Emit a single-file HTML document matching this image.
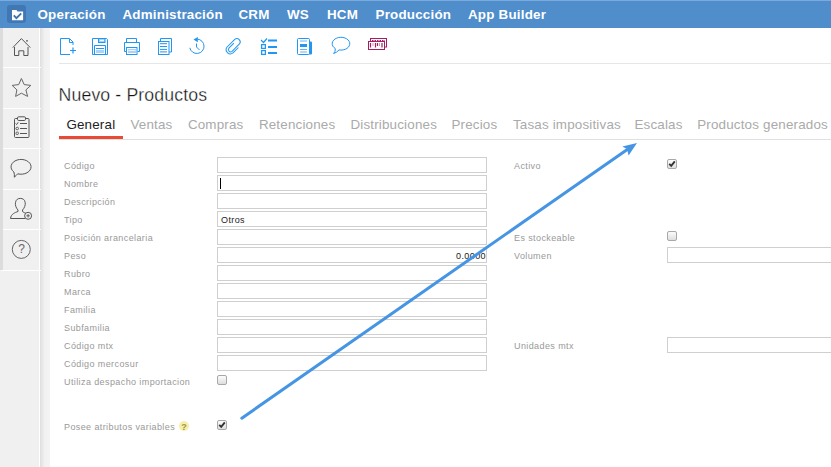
<!DOCTYPE html>
<html><head><meta charset="utf-8">
<style>
*{margin:0;padding:0;box-sizing:border-box}
html,body{width:831px;height:467px;overflow:hidden;background:#fff;font-family:"Liberation Sans",sans-serif}
.abs{position:absolute}
#top{position:absolute;left:0;top:0;width:831px;height:28px;background:#4f8dcb;border-top:1px solid #7aaade}
#logo{position:absolute;left:7px;top:5px;width:19px;height:18px;background:#4178b3;border-radius:3px}
.nav{position:absolute;top:7px;color:#fff;font-weight:bold;font-size:13.4px;letter-spacing:0.2px;line-height:15px;white-space:nowrap}
#side{position:absolute;left:0;top:28px;width:39px;height:439px;background:#f0f0f0}
#strip{position:absolute;left:0;top:28px;width:3px;height:242px;background:#dcdcdc}
#sidel{position:absolute;left:39px;top:28px;width:1px;height:439px;background:#fff}
#grad{position:absolute;left:40px;top:28px;width:10px;height:439px;background:linear-gradient(to right,#dedede,#f1f1f1 45%,#f4f4f4)}
.sep{position:absolute;left:3px;width:38px;height:1px;background:#fff}
.sico{position:absolute;left:0;width:39px}
#tbline{position:absolute;left:59px;top:63px;width:772px;height:1px;background:#e6e6e6}
#title{position:absolute;left:58.6px;top:85px;font-size:17.7px;letter-spacing:0.12px;color:#111;-webkit-text-stroke:0.3px #fff;white-space:nowrap;line-height:20px}
.tab{position:absolute;top:117px;font-size:13.4px;letter-spacing:0.18px;color:#aaa;white-space:nowrap;line-height:15px}
#tabline{position:absolute;left:59px;top:139px;width:772px;height:1px;background:#e0e0e0}
#tabred{position:absolute;left:59px;top:136px;width:64px;height:3px;background:#e84a35}
.lbl{position:absolute;font-size:9px;letter-spacing:0.4px;color:#999;white-space:nowrap;line-height:12px}
.inp{position:absolute;height:16px;border:1px solid #cfcfcf;background:#fff;font-size:9px;letter-spacing:0.4px;color:#222;line-height:14px;padding-top:1px}
.cb{position:absolute;width:10px;height:10px;border:1px solid #a8a8a8;border-radius:2px;background:linear-gradient(#fcfcfc,#dedede)}
</style></head><body>
<div id="top"></div>
<div id="logo">
<svg width="19" height="18" viewBox="0 0 19 18" style="position:absolute;left:0;top:0">
<path d="M5 5h4.5l1 1.4h5.6v8.8H5z" fill="#fff"/>
<path d="M6.8 10.4L9.4 13.1L14.2 8.3" stroke="#3f74ad" stroke-width="1.9" fill="none"/>
</svg>
</div>
<div class="nav" style="left:37.5px">Operación</div>
<div class="nav" style="left:122.5px">Administración</div>
<div class="nav" style="left:238.5px">CRM</div>
<div class="nav" style="left:287px">WS</div>
<div class="nav" style="left:327px">HCM</div>
<div class="nav" style="left:375.5px">Producción</div>
<div class="nav" style="left:468px">App Builder</div>

<div id="side"></div>
<div id="strip"></div>
<div id="sidel"></div>
<div id="grad"></div>
<div class="sep" style="top:67px"></div>
<div class="sep" style="top:108px"></div>
<div class="sep" style="top:148px"></div>
<div class="sep" style="top:189px"></div>
<div class="sep" style="top:229px"></div>
<div class="sep" style="top:270px;left:1px;width:40px"></div>


<svg class="abs" style="left:0;top:0" width="400" height="70" fill="none" stroke="#2196f3" stroke-width="1">
<!-- new doc -->
<path d="M69.5 38.5H60.5V54.5H70"/>
<path d="M69.5 38.5L73 42V45"/>
<path d="M69.5 39V42.5H73" stroke-width="1"/>
<path d="M70 50.5H76M73 47.5V53.5" stroke-width="1.2"/>
<!-- floppy -->
<path d="M92.5 38.5H106.5L107.5 39.5V54.5H92.5Z"/>
<rect x="98.5" y="38.5" width="6.5" height="4" fill="#a6d4fa"/>
<path d="M100 40.5H104" stroke="#fff"/>
<path d="M94.5 54.5V45.5H105.5V54.5"/>
<path d="M96 48.5H104"/>
<rect x="96" y="50" width="8" height="3" fill="#a6d4fa" stroke="none"/>
<!-- printer -->
<path d="M126.5 42.5V38.5H136.5V42.5"/>
<path d="M126.5 51.5H124.5V42.5H139.5V51.5H137.5"/>
<rect x="126.5" y="47.5" width="10.5" height="7" fill="#fff"/>
<rect x="128" y="49" width="8" height="4" fill="#a6d4fa" stroke="none"/>
<path d="M128.5 50.5H135.5" stroke="#fff" stroke-width="0.8"/>
<!-- copy -->
<path d="M160.5 41V38.5H171.5V52H169"/>
<rect x="158.5" y="41.5" width="10.5" height="13" fill="#fff"/>
<path d="M160 43.7H167M160 46.5H167M160 49.4H167M160 51.9H167" stroke-width="1"/>
<!-- history -->
<path d="M189.8 47.8A7.2 7.2 0 1 0 197.3 39.1"/>
<path d="M193.5 39.6L197.8 37V42.2Z" fill="#2196f3" stroke="none"/>
<path d="M196.5 43.5V47L199.5 50"/>
<!-- paperclip -->
<g transform="rotate(45 233.5 46.5)">
<path d="M231.4 43.9V50.9A2.26 2.26 0 0 0 235.9 50.9V40.5A3.32 3.32 0 0 0 229.3 40.5V51.4A4.24 4.24 0 0 0 237.7 51.4V43.7"/>
</g>
<!-- checklist -->
<path d="M261 40L263.5 42.5L267 38.5" stroke-width="1.2"/>
<rect x="261.6" y="44.6" width="3.8" height="3.8" stroke-width="1.25"/>
<rect x="261.6" y="50.6" width="3.8" height="3.8" stroke-width="1.25"/>
<path d="M268 40.5H277M268 47H277M268 53H277" stroke-width="2"/>
<!-- newspaper -->
<rect x="309" y="41.5" width="3" height="13" rx="1" fill="#2196f3" stroke="none"/>
<rect x="297.5" y="38.5" width="12" height="16" rx="1" fill="#fff"/>
<path d="M300 41H307M300 49.5H307M300 52H307" stroke="#64b5f6"/>
<rect x="300" y="44" width="7" height="3" fill="#2196f3" stroke="none"/>
<!-- speech -->
<path d="M339 49.93A8.8 6.4 0 1 0 335.3 48.58Q335.6 51.6 333.6 53.5Q336.8 52.6 339 49.93"/>
<!-- barcode -->
<g stroke="#a51e64">
<rect x="370.5" y="38.5" width="16" height="8.5"/>
<rect x="368.5" y="41.5" width="16" height="8" fill="#fff"/>
<path d="M372 40.5H385" stroke-dasharray="1.5 1" stroke-width="1"/>
<path d="M370.5 43V47.5M375.5 43V47.5M377.5 43V46M382 43V47.5" stroke-width="1.2"/>
<path d="M373 43V46M379.5 43V46" stroke-width="0.8" stroke-opacity="0.6"/>
</g>
</svg>
<svg class="abs" style="left:0;top:0" width="40" height="280" fill="none" stroke="#555" stroke-width="1">
<!-- house -->
<path d="M12.8 47.6L21.4 38.6L30.3 47.6"/>
<path d="M14.5 47V55.5H18.8V50.8H23.8V55.5H28V47"/>
<circle cx="27" cy="40.8" r="0.9" fill="#555" stroke="none"/>
<!-- star -->
<path d="M21.4 78.5L24.2 84.6L30.8 85.4L25.9 89.9L27.6 96.4L21.4 93.2L15.6 96.4L16.9 89.9L12.2 85.4L18.7 84.6Z" stroke-linejoin="round" stroke="#666"/>
<!-- clipboard -->
<rect x="14.5" y="118.5" width="14.5" height="19" rx="1"/>
<rect x="17.5" y="116.8" width="8" height="3.7" rx="1.2" fill="#f0f0f0"/>
<path d="M15.6 123.6L16.6 124.5L18.2 122.3"/>
<path d="M20 123.5H27M20 128.5H27M20 133.5H27"/>
<circle cx="17.2" cy="128.5" r="1.3" stroke-width="0.9"/>
<circle cx="17.2" cy="133.3" r="1.3" stroke-width="0.9"/>
<!-- speech -->
<path d="M17.7 173.8A10 7.4 0 1 0 13.9 172Q14.7 175 14.3 177.2Q16.2 175.6 17.7 173.8"/>
<!-- user -->
<path d="M18 210C16 208 15 205 15.5 202.5C16 199.5 18 198.4 20.3 198.4C22.6 198.4 24.8 199.5 25.2 202.5C25.6 205 24.5 208 22.5 210V211.5C24 212.5 25 213 26 213.5M18 210V211.5C15 212.5 11 214 10.5 218.5H25"/>
<circle cx="28.1" cy="215.8" r="3.5" fill="#f0f0f0"/>
<path d="M26.3 215.8H29.9M28.1 214V217.6" stroke-width="0.9"/>
<!-- help -->
<circle cx="21.3" cy="249.4" r="9" stroke="#666"/>
</svg>
<div class="abs" style="left:15px;top:241px;width:13px;text-align:center;font-size:12px;line-height:16px;color:#666">?</div>
<div id="tbline"></div>
<div id="title">Nuevo - Productos</div>
<div class="tab" style="left:66.4px;color:#222">General</div>
<div class="tab" style="left:130.4px">Ventas</div>
<div class="tab" style="left:187.9px">Compras</div>
<div class="tab" style="left:258.9px">Retenciones</div>
<div class="tab" style="left:350.4px">Distribuciones</div>
<div class="tab" style="left:451.4px">Precios</div>
<div class="tab" style="left:512.9px">Tasas impositivas</div>
<div class="tab" style="left:634.4px">Escalas</div>
<div class="tab" style="left:697.2px">Productos generados</div>
<div id="tabline"></div>
<div id="tabred"></div>

<div class="lbl" style="left:64px;top:160px">Código</div>
<div class="lbl" style="left:64px;top:178px">Nombre</div>
<div class="lbl" style="left:64px;top:196px">Descripción</div>
<div class="lbl" style="left:64px;top:214px">Tipo</div>
<div class="lbl" style="left:64px;top:232px">Posición arancelaria</div>
<div class="lbl" style="left:64px;top:250px">Peso</div>
<div class="lbl" style="left:64px;top:268px">Rubro</div>
<div class="lbl" style="left:64px;top:286px">Marca</div>
<div class="lbl" style="left:64px;top:304px">Familia</div>
<div class="lbl" style="left:64px;top:322px">Subfamilia</div>
<div class="lbl" style="left:64px;top:340px">Código mtx</div>
<div class="lbl" style="left:64px;top:358px">Código mercosur</div>
<div class="lbl" style="left:64px;top:376px">Utiliza despacho importacion</div>
<div class="lbl" style="left:64px;top:421px">Posee atributos variables</div>

<div class="inp" style="left:217px;top:157px;width:270px"></div>
<div class="inp" style="left:217px;top:175px;width:270px"><div class="abs" style="left:2px;top:2px;width:1px;height:11px;background:#000"></div></div>
<div class="inp" style="left:217px;top:193px;width:270px"></div>
<div class="inp" style="left:217px;top:211px;width:270px;padding-left:3px">Otros</div>
<div class="inp" style="left:217px;top:229px;width:270px"></div>
<div class="inp" style="left:217px;top:247px;width:270px;text-align:right">0.0000</div>
<div class="inp" style="left:217px;top:265px;width:270px"></div>
<div class="inp" style="left:217px;top:283px;width:270px"></div>
<div class="inp" style="left:217px;top:301px;width:270px"></div>
<div class="inp" style="left:217px;top:319px;width:270px"></div>
<div class="inp" style="left:217px;top:337px;width:270px"></div>
<div class="inp" style="left:217px;top:355px;width:270px"></div>
<div class="cb" style="left:217px;top:375px"></div>
<div class="cb" style="left:217px;top:420px"><svg class="abs" style="left:-1px;top:-1px" width="10" height="10"><path d="M2.2 4.8L4.2 6.8L7.8 2.4" stroke="#333" stroke-width="1.9" fill="none"/></svg></div>

<div class="abs" style="left:179px;top:421px;width:10px;height:10px;border-radius:50%;background:#f7eeab"></div>
<div class="abs" style="left:179px;top:420.6px;width:10px;text-align:center;font-size:9px;font-weight:bold;line-height:12px;color:#9d9440">?</div>
<div class="lbl" style="left:514px;top:160px">Activo</div>
<div class="lbl" style="left:514px;top:232px">Es stockeable</div>
<div class="lbl" style="left:514px;top:250px">Volumen</div>
<div class="lbl" style="left:514px;top:340px">Unidades mtx</div>
<div class="cb" style="left:667px;top:159px"><svg class="abs" style="left:-1px;top:-1px" width="10" height="10"><path d="M2.2 4.8L4.2 6.8L7.8 2.4" stroke="#333" stroke-width="1.9" fill="none"/></svg></div>
<div class="cb" style="left:667px;top:231px"></div>
<div class="inp" style="left:667px;top:247px;width:180px"></div>
<div class="inp" style="left:667px;top:337px;width:180px"></div>

<svg class="abs" style="left:0;top:0" width="831" height="467">
<line x1="241.8" y1="418.2" x2="628" y2="149" stroke="#4695e4" stroke-width="3" stroke-linecap="round"/>
<path d="M637 143 L622.3 146.4 L627 149 L628.6 155.5 Z" fill="#4695e4"/>
</svg>
</body></html>
